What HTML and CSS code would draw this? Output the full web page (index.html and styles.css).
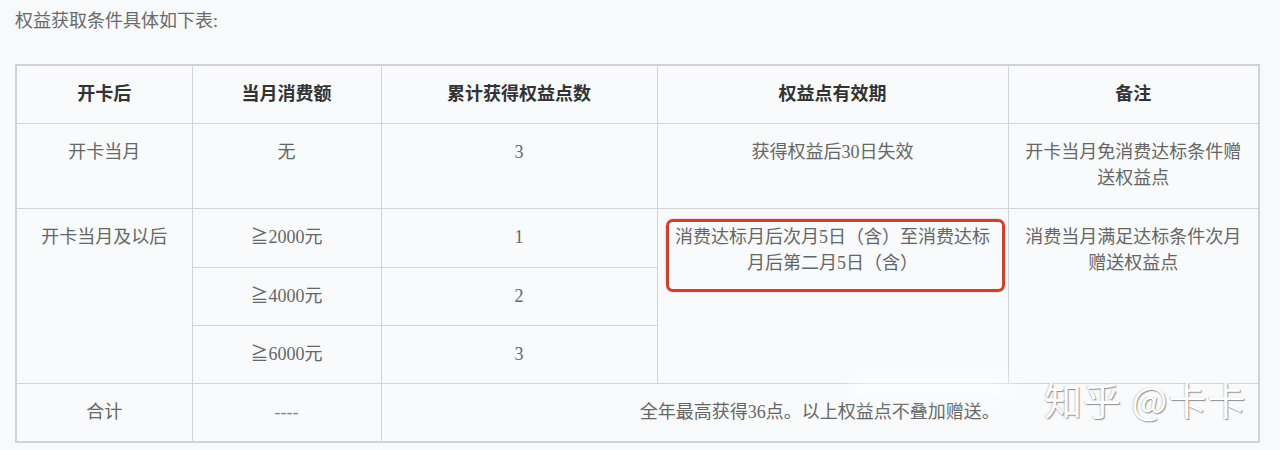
FILE: index.html
```html
<!DOCTYPE html>
<html lang="zh-CN">
<head>
<meta charset="utf-8">
<title>权益获取条件</title>
<link rel="stylesheet" href="styles.css">
</head>
<body>
<div class="page">
  <p class="intro">权益获取条件具体如下表:</p>
  <table class="rules">
    <colgroup>
      <col class="c1"><col class="c2"><col class="c3"><col class="c4"><col class="c5">
    </colgroup>
    <thead>
      <tr>
        <th>开卡后</th>
        <th>当月消费额</th>
        <th>累计获得权益点数</th>
        <th>权益点有效期</th>
        <th>备注</th>
      </tr>
    </thead>
    <tbody>
      <tr class="tall">
        <td>开卡当月</td>
        <td>无</td>
        <td>3</td>
        <td>获得权益后30日失效</td>
        <td>开卡当月免消费达标条件赠送权益点</td>
      </tr>
      <tr class="tall">
        <td rowspan="3">开卡当月及以后</td>
        <td>≧2000元</td>
        <td>1</td>
        <td rowspan="3" class="marked">消费达标月后次月5日（含）至消费达标月后第二月5日（含）<span class="mark"></span></td>
        <td rowspan="3">消费当月满足达标条件次月赠送权益点</td>
      </tr>
      <tr>
        <td>≧4000元</td>
        <td>2</td>
      </tr>
      <tr>
        <td>≧6000元</td>
        <td>3</td>
      </tr>
      <tr>
        <td>合计</td>
        <td class="dash">----</td>
        <td colspan="3">全年最高获得36点。以上权益点不叠加赠送。</td>
      </tr>
    </tbody>
  </table>
  <div class="blur"></div>
  <div class="watermark">知乎 @卡卡</div>
</div>
</body>
</html>
```

FILE: styles.css
```css
html, body {
  margin: 0;
  padding: 0;
  background: #f7f9fb;
}

.page {
  position: relative;
  padding: 8px 22px 0 15px;
  font-family: "Liberation Serif", "Noto Sans CJK SC", serif;
  font-size: 18px;
  color: #666;
}

.intro {
  margin: 0;
  line-height: 26px;
  color: #6a6a6a;
}

.rules {
  margin-top: 30px;
  width: 1243px;
  table-layout: fixed;
  border-collapse: collapse;
  border: 2px solid #d2d2d4;
  background: #f8fafc;
}

.c1 { width: 176px; }
.c2 { width: 189px; }
.c3 { width: 276px; }
.c4 { width: 351px; }
.c5 { width: 251px; }

.rules th,
.rules td {
  border: 1px solid #d4d4d6;
  padding: 15px 12px 16px;
  line-height: 26px;
  text-align: center;
  vertical-align: top;
}

.rules .tall td {
  padding-bottom: 17px;
}

.rules th {
  color: #333;
  font-weight: 600;
}

.rules td {
  color: #666;
}

.rules .dash {
  color: #888;
}

.marked {
  position: relative;
}

.mark {
  position: absolute;
  left: 8px;
  right: 3px;
  top: 10px;
  height: 67px;
  border: 3px solid #c9412f;
  border-radius: 7px;
  box-shadow: 0 0 2px rgba(201, 65, 47, 0.5);
}

.blur {
  position: absolute;
  left: 850px;
  top: 374px;
  width: 160px;
  height: 26px;
  background: rgba(255, 255, 255, 0.45);
  filter: blur(7px);
}

.watermark {
  position: absolute;
  left: 1044px;
  top: 374px;
  font-family: "Noto Sans CJK SC", sans-serif;
  font-size: 38px;
  line-height: 50px;
  letter-spacing: 1px;
  color: #ffffff;
  text-shadow: 1px 1px 1px rgba(60, 60, 60, 0.55), -1px 0 1px rgba(120, 120, 120, 0.3);
}
```
